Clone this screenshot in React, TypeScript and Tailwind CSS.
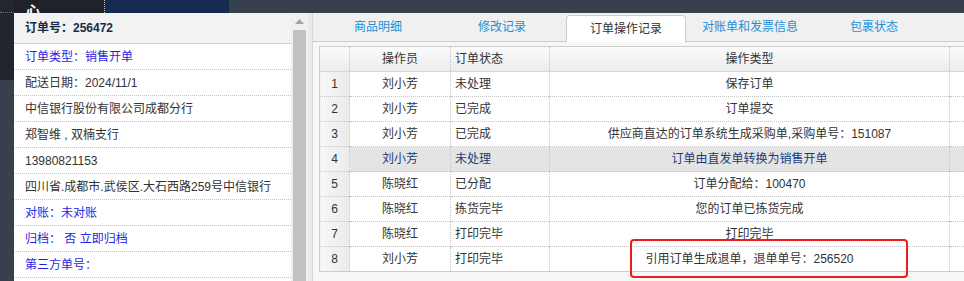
import React from 'react'

const font = { fontFamily: '"Liberation Sans", Arial, "Noto Sans CJK SC", sans-serif' }

const infoRows = [
  { text: '订单类型：销售开单', blue: true },
  { text: '配送日期：2024/11/1' },
  { text: '中信银行股份有限公司成都分行' },
  { text: '郑智维 , 双楠支行' },
  { text: '13980821153' },
  { text: '四川省.成都市.武侯区.大石西路259号中信银行' },
  { text: '对账：未对账', blue: true },
  { text: '归档： 否 立即归档', blue: true },
  { text: '第三方单号：', blue: true },
]

const tabs = ['商品明细', '修改记录', '订单操作记录', '对账单和发票信息', '包裹状态']

const logs = [
  ['刘小芳', '未处理', '保存订单'],
  ['刘小芳', '已完成', '订单提交'],
  ['刘小芳', '已完成', '供应商直达的订单系统生成采购单,采购单号：151087'],
  ['刘小芳', '未处理', '订单由直发单转换为销售开单'],
  ['陈晓红', '已分配', '订单分配给：100470'],
  ['陈晓红', '拣货完毕', '您的订单已拣货完成'],
  ['陈晓红', '打印完毕', '打印完毕'],
  ['刘小芳', '打印完毕', '引用订单生成退单，退单单号：256520'],
]

export default function App() {
  return (
    <div className="relative w-[964px] h-[281px] overflow-hidden bg-[#37414e] text-[12px] text-[#333]" style={font}>
      {/* top nav (cut off by the viewport) */}
      <div className="flex h-[13px]">
        <div className="w-[14px] shrink-0 bg-[#22272e] border-b border-dotted border-[#6a7280]" />
        <div className="w-[91px] shrink-0 bg-[#1f2329] border-r border-dotted border-[#c8ccd2] overflow-hidden">
          <div className="mt-[-16px] ml-[12px] text-white text-[14px] font-bold leading-[18px]">订单管理中心</div>
        </div>
        <div className="w-[124px] shrink-0 bg-[#152a4f] overflow-hidden">
          <div className="mt-[-16px] ml-[10px] text-white text-[14px] leading-[18px]">订单</div>
        </div>
        <div className="flex-1 bg-[#37414e]" />
      </div>

      <div className="flex h-[268px]">
        <div className="w-[14px] shrink-0 flex flex-col">
          <div className="h-[67px] bg-[#22262c]" />
          <div className="flex-1 bg-[#37414e]" />
        </div>

        {/* left info panel */}
        <div className="w-[277px] shrink-0 bg-white">
          <div className="h-[31px] bg-[#f2f2f2] border-b border-[#cfcfcf] pl-[11px] flex items-center font-bold text-[#1c2b4a]">
            订单号：256472
          </div>
          {infoRows.map((r, i) => (
            <div
              key={i}
              className={`h-[26px] border-b border-dotted border-[#c4c4c4] pl-[11px] flex items-center whitespace-nowrap ${r.blue ? 'text-[#1f1fe6]' : 'text-[#333]'}`}
            >
              {r.text}
            </div>
          ))}
        </div>

        {/* scrollbar */}
        <div className="w-[17px] shrink-0 bg-[#f0f0f0] flex flex-col items-center">
          <div className="h-[17px] w-full flex items-center justify-center">
            <svg width="9" height="5" viewBox="0 0 9 5">
              <path d="M0 5 L4.5 0 L9 5 Z" fill="#a3a3a3" />
            </svg>
          </div>
          <div className="w-[13px] flex-1 bg-[#c1c1c1]" />
        </div>
        <div className="w-[5px] shrink-0 bg-[#e9e9e9] border-r border-[#d6d6d6]" />

        {/* right panel */}
        <div className="flex-1 min-w-0 overflow-hidden bg-[#f7f7f7]">
          <div className="h-[29px] bg-[#f0f0f0] border-b border-[#cccccc] flex items-end pl-[3px]">
            {tabs.map((t, i) =>
              i === 2 ? (
                <div
                  key={t}
                  className="w-[120px] shrink-0 mx-[2px] h-[27px] mb-[-1px] bg-white border border-b-0 border-[#cccccc] rounded-t-[4px] flex items-center justify-center text-[#333]"
                >
                  {t}
                </div>
              ) : (
                <div key={t} className="w-[124px] shrink-0 h-[28px] flex items-center justify-center text-[#1d8fd6]">
                  {t}
                </div>
              )
            )}
          </div>

          <div className="pt-[4px] pl-[6px]">
            <table className="border-collapse bg-white border border-[#cccccc] table-fixed w-[660px]">
              <colgroup>
                <col className="w-[30px]" />
                <col className="w-[101px]" />
                <col className="w-[99px]" />
                <col className="w-[400px]" />
                <col />
              </colgroup>
              <thead>
                <tr className="h-[25px] bg-gradient-to-b from-[#fbfbfb] to-[#ececec] border-b border-[#d9d9d9]">
                  <th className="font-normal border-r border-dotted border-[#c4c4c4]" />
                  <th className="font-normal text-center border-r border-dotted border-[#c4c4c4]">操作员</th>
                  <th className="font-normal text-left pl-[4px] border-r border-dotted border-[#c4c4c4]">订单状态</th>
                  <th className="font-normal text-center border-r border-dotted border-[#c4c4c4]">操作类型</th>
                  <th className="font-normal" />
                </tr>
              </thead>
              <tbody>
                {logs.map((row, i) => {
                  const hl = i === 3
                  return (
                    <tr
                      key={i}
                      className={`h-[25px] border-b border-dotted border-[#c4c4c4] ${hl ? 'bg-[#e4e4e4] text-[#1d3a78]' : 'text-[#333]'}`}
                    >
                      <td className="text-center bg-gradient-to-r from-[#f7f7f7] to-[#ebebeb] border-r border-dotted border-[#c4c4c4] text-[#333]">
                        {i + 1}
                      </td>
                      <td className="text-center border-r border-dotted border-[#c4c4c4]">{row[0]}</td>
                      <td className="text-left pl-[4px] border-r border-dotted border-[#c4c4c4]">{row[1]}</td>
                      <td className="text-center border-r border-dotted border-[#c4c4c4] whitespace-nowrap">{row[2]}</td>
                      <td />
                    </tr>
                  )
                })}
              </tbody>
            </table>
          </div>
        </div>
      </div>

      {/* annotation */}
      <div className="absolute left-[630px] top-[239px] w-[278px] h-[39px] border-2 border-[#ee1c1c] rounded-[4px]" />
    </div>
  )
}
